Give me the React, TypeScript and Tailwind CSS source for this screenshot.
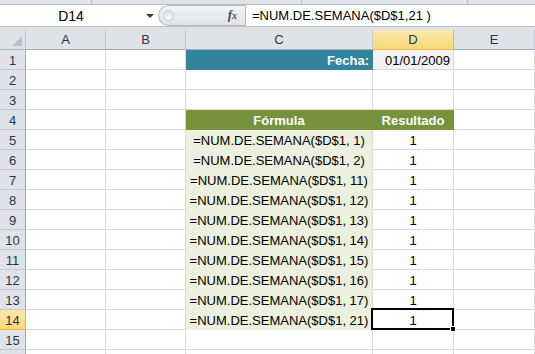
import React from "react";

const FONT = { fontFamily: '"Liberation Sans", Arial, sans-serif' };

const args = [1, 2, 11, 12, 13, 14, 15, 16, 17, 21];

function ColHeader({ w, label, active }: { w: string; label: string; active?: boolean }) {
  return (
    <div
      className={`${w} shrink-0 h-full border-r border-b flex justify-center pt-[2px] leading-[16px] text-[13px] text-[#27354a] ${
        active
          ? "bg-linear-to-b from-[#fbe7ae] to-[#f9d873] border-[#f2b54a]"
          : "bg-[#dfe3e8] border-r-[#c3c9d0] border-b-[#a3adb8]"
      }`}
    >
      {label}
    </div>
  );
}

function RowHeader({ n, active }: { n: number; active?: boolean }) {
  return (
    <div
      className={`w-[26px] shrink-0 h-full border-r border-b flex justify-center pt-[3px] leading-[16px] text-[13px] text-[#27354a] ${
        active
          ? "bg-linear-to-b from-[#fbe7ae] to-[#f9d873] border-[#f2b54a]"
          : "bg-[#dfe3e8] border-r-[#a3adb8] border-b-[#c3c9d0]"
      }`}
    >
      {n <= 15 ? n : ""}
    </div>
  );
}

function Cell({
  w,
  className = "",
  children,
}: {
  w: string;
  className?: string;
  children?: React.ReactNode;
}) {
  return (
    <div
      className={`${w} shrink-0 h-full border-r border-b pt-[3px] leading-[16px] text-[13px] whitespace-nowrap overflow-hidden ${
        className || "border-[#d9d9d9]"
      }`}
    >
      {children}
    </div>
  );
}

export default function App() {
  const rows = [];
  for (let n = 1; n <= 16; n++) {
    let c: React.ReactNode = <Cell w="w-[187px]" />;
    let d: React.ReactNode = <Cell w="w-[81px]" />;
    if (n === 1) {
      c = (
        <Cell w="w-[187px]" className="bg-[#31849b] border-[#31849b] text-white font-bold text-right pr-[3px]">
          Fecha:
        </Cell>
      );
      d = (
        <Cell w="w-[81px]" className="bg-[#f2f2f2] border-[#d9d9d9] text-right pr-[3px] text-black">
          01/01/2009
        </Cell>
      );
    } else if (n === 4) {
      c = (
        <Cell w="w-[187px]" className="bg-[#76923c] border-[#76923c] text-white font-bold text-center">
          Fórmula
        </Cell>
      );
      d = (
        <Cell w="w-[81px]" className="bg-[#76923c] border-[#76923c] text-white font-bold text-center">
          Resultado
        </Cell>
      );
    } else if (n >= 5 && n <= 14) {
      const a = args[n - 5];
      c = (
        <Cell w="w-[187px]" className="bg-[#ebf1de] border-b-[#ebf1de] border-r-[#d9d9d9] text-black text-center">
          {`=NUM.DE.SEMANA($D$1, ${a})`}
        </Cell>
      );
      d =
        n === 14 ? (
          <div className="w-[81px] shrink-0 h-full border-r border-b border-[#d9d9d9] relative pt-[3px] leading-[16px] text-[13px] text-center text-black">
            1
            <div className="absolute -left-[2px] -top-[2px] -right-[1px] -bottom-[1px] border-2 border-black" />
            <div className="absolute -right-[3px] -bottom-[3px] w-[6px] h-[6px] bg-black border border-white" />
          </div>
        ) : (
          <Cell w="w-[81px]" className="border-[#d9d9d9] text-center text-black">
            1
          </Cell>
        );
    }
    rows.push(
      <div key={n} className="flex h-[20px]">
        <RowHeader n={n} active={n === 14} />
        <Cell w="w-[80px]" />
        <Cell w="w-[80px]" />
        {c}
        {d}
        <Cell w="w-[81px]" />
      </div>
    );
  }

  return (
    <div className="w-[535px] h-[354px] overflow-hidden bg-white text-black" style={FONT}>
      {/* top toolbar remnant */}
      <div className="flex h-[5px] bg-[#dfe3e8] border-b border-[#b7bfc8]">
        <div className="w-[92px] border-r border-[#b7bfc8]" />
        <div className="w-[210px] border-r border-[#b7bfc8]" />
        <div className="w-[166px] border-r border-[#b7bfc8]" />
        <div className="flex-1" />
      </div>
      {/* formula bar */}
      <div className="flex h-[21px] bg-white">
        <div className="w-[158px] flex items-center">
          <div className="w-[142px] text-center text-[14px] leading-[16px] text-black">D14</div>
          <div className="flex-1 flex justify-center">
            <div className="w-0 h-0 border-l-[4px] border-r-[4px] border-t-[4px] border-l-transparent border-r-transparent border-t-[#3c3c3c]" />
          </div>
        </div>
        <div className="w-[87px] h-full rounded-l-[11px] border border-r-0 border-[#b3bbc4] bg-linear-to-b from-[#f2f4f6] to-[#dfe3e8] flex items-center">
          <div className="ml-[4px] w-[11px] h-[11px] rounded-full border border-[#c4cad1] bg-linear-to-b from-[#dfe2e6] to-[#f7f8f9]" />
          <div className="flex-1" />
          <div
            className="mr-[8px] text-[13px] italic font-bold text-[#4a4a4a] leading-[16px]"
            style={{ fontFamily: '"Liberation Serif", "Times New Roman", serif' }}
          >
            f<span className="text-[10px]">x</span>
          </div>
        </div>
        <div className="flex-1 h-full border-l border-[#b3bbc4] flex items-center pl-[6px] text-[13px] leading-[16px] text-black whitespace-nowrap">
          =NUM.DE.SEMANA($D$1,21 )
        </div>
      </div>
      <div className="h-[4px] bg-[#dfe3e8] border-t border-[#b7bfc8]" />
      {/* column headers */}
      <div className="flex h-[20px]">
        <div className="w-[26px] shrink-0 h-full bg-[#dfe3e8] border-r border-b border-r-[#c3c9d0] border-b-[#a3adb8] flex items-end justify-end pr-[3px] pb-[3px]">
          <svg width="10" height="10" viewBox="0 0 10 10">
            <polygon points="10,0 10,10 0,10" fill="#b7bec6" />
          </svg>
        </div>
        <ColHeader w="w-[80px]" label="A" />
        <ColHeader w="w-[80px]" label="B" />
        <ColHeader w="w-[187px]" label="C" />
        <ColHeader w="w-[81px]" label="D" active />
        <ColHeader w="w-[81px]" label="E" />
      </div>
      {rows}
    </div>
  );
}
